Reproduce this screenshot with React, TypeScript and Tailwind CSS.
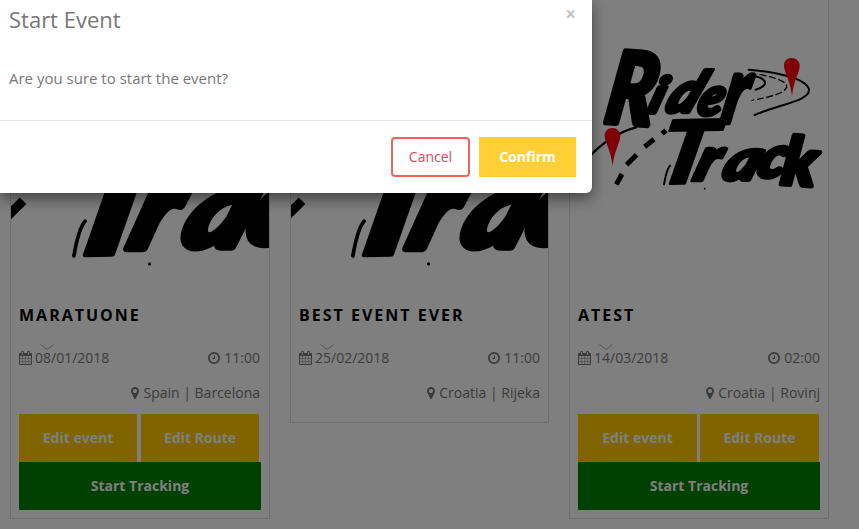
import React from "react";

type IconProps = { className?: string };

const CalendarIcon = ({ className }: IconProps) => (
  <svg viewBox="64 0 1664 1792" className={className} fill="currentColor">
    <path d="M192 1664h288v-288h-288v288zm352 0h320v-288h-320v288zm-352-352h288v-320h-288v320zm352 0h320v-320h-320v320zm-352-384h288v-288h-288v288zm736 736h320v-288h-320v288zm-384-736h320v-288h-320v288zm768 736h288v-288h-288v288zm-384-352h320v-320h-320v320zm-352-864v-288q0-13-9.5-22.5t-22.5-9.5h-64q-13 0-22.5 9.5t-9.5 22.5v288q0 13 9.5 22.5t22.5 9.5h64q13 0 22.5-9.5t9.5-22.5zm736 864h288v-320h-288v320zm-384-384h320v-288h-320v288zm384 0h288v-288h-288v288zm32-480v-288q0-13-9.5-22.5t-22.5-9.5h-64q-13 0-22.5 9.5t-9.5 22.5v288q0 13 9.5 22.5t22.5 9.5h64q13 0 22.5-9.5t9.5-22.5zm384-64v1280q0 52-38 90t-90 38h-1408q-52 0-90-38t-38-90v-1280q0-52 38-90t90-38h128v-96q0-66 47-113t113-47h64q66 0 113 47t47 113v96h384v-96q0-66 47-113t113-47h64q66 0 113 47t47 113v96h128q52 0 90 38t38 90z" />
  </svg>
);

const ClockIcon = ({ className }: IconProps) => (
  <svg viewBox="128 0 1536 1792" className={className} fill="currentColor">
    <path d="M1024 544v448q0 14-9 23t-23 9h-320q-14 0-23-9t-9-23v-64q0-14 9-23t23-9h224v-352q0-14 9-23t23-9h64q14 0 23 9t9 23zm416 352q0-148-73-273t-198-198-273-73-273 73-198 198-73 273 73 273 198 198 273 73 273-73 198-198 73-273zm224 0q0 209-103 385.5t-279.5 279.5-385.5 103-385.5-103-279.5-279.5-103-385.5 103-385.5 279.5-279.5 385.5-103 385.5 103 279.5 279.5 103 385.5z" />
  </svg>
);

const MarkerIcon = ({ className }: IconProps) => (
  <svg viewBox="384 0 1024 1792" className={className} fill="currentColor">
    <path d="M1152 640q0-106-75-181t-181-75-181 75-75 181 75 181 181 75 181-75 75-181zm256 0q0 109-33 179l-364 774q-16 33-47.5 52t-67.5 19-67.5-19-46.5-52l-365-774q-33-70-33-179 0-212 150-362t362-150 362 150 150 362z" />
  </svg>
);

type Glyph = { c: string; x: number; y: number; size: number; sx: number; skew: number; rot: number; w: number };

const glyphs: Glyph[] = [
  { c: "R", x: 38, y: 276, size: 298, sx: 0.8, skew: -6, rot: 4, w: 18 },
  { c: "i", x: 168, y: 248, size: 150, sx: 1.1, skew: -18, rot: 0, w: 12 },
  { c: "d", x: 220, y: 246, size: 168, sx: 1, skew: -24, rot: 0, w: 14 },
  { c: "e", x: 316, y: 254, size: 160, sx: 0.95, skew: -16, rot: 0, w: 12 },
  { c: "r", x: 388, y: 278, size: 280, sx: 0.72, skew: -12, rot: 0, w: 14 },
  { c: "T", x: 190, y: 462, size: 262, sx: 1.14, skew: -13, rot: -1, w: 8 },
  { c: "r", x: 306, y: 450, size: 180, sx: 1.05, skew: -18, rot: 0, w: 14 },
  { c: "a", x: 390, y: 449, size: 174, sx: 1.15, skew: -20, rot: 0, w: 12 },
  { c: "c", x: 494, y: 442, size: 172, sx: 1.05, skew: -18, rot: 0, w: 14 },
  { c: "k", x: 570, y: 462, size: 200, sx: 1, skew: -4, rot: 4, w: 14 },
];

const Pin = ({ x, y }: { x: number; y: number }) => (
  <path
    transform={`translate(${x} ${y})`}
    d="M0 0C-14 0-24 10-23 24C-21 46-5 66 1 114C6 66 23 46 24 24C24 10 14 0 0 0Z"
    fill="#ff0010"
  />
);

const RiderTrackLogo = ({ className }: IconProps) => (
  <svg viewBox="-60 -90 774 900" className={className}>
    <g fill="none" stroke="#000" strokeLinecap="round">
      <path d="M-10 388C30 344 78 308 138 292" strokeWidth="7" />
      <path d="M476 119C545 125 648 142 657 178C661 213 568 222 494 255" strokeWidth="6" />
      <path d="M488 137C522 142 531 157 521 167Q514 174 497 179" strokeWidth="6" />
      <path d="M510 133C560 145 592 154 590 172C582 190 545 200 486 211" strokeWidth="4" strokeDasharray="18 11" />
      <path d="M240 407C233 415 226 440 222 463" strokeWidth="6" />
      <path d="M228 301L216 311M192 328L164 350M140 374L110 404M96 432L79 463" strokeWidth="15" strokeLinecap="butt" />
    </g>
    <circle cx="344" cy="476" r="2.5" />
    {glyphs.map((g, i) => (
      <text
        key={i}
        transform={`translate(${g.x} ${g.y}) rotate(${g.rot}) skewX(${g.skew}) scale(${g.sx} 1)`}
        fontSize={g.size}
        strokeWidth={g.w}
        stroke="#000"
        strokeLinejoin="round"
        className="font-['Lato','Open_Sans',sans-serif] font-black italic"
      >
        {g.c}
      </text>
    ))}
    <Pin x={605} y={84} />
    <Pin x={67} y={294} />
  </svg>
);

type EventCardProps = {
  title: string;
  date: string;
  time: string;
  place: string;
  width: string;
  buttonRow?: string;
  textInset?: string;
  zoomed?: boolean;
  owned?: boolean;
};

const EventCard = ({
  title,
  date,
  time,
  place,
  width,
  buttonRow = "",
  textInset = "",
  zoomed,
  owned,
}: EventCardProps) => (
  <article className={`shrink-0 border border-t-0 border-[#dcdcdc] ${width}`}>
    <div className="flex h-[290px] items-start justify-center overflow-hidden">
      <RiderTrackLogo
        className={zoomed ? "-mt-[87px] mr-[3px] h-[558px] w-[480px] shrink-0" : "h-[300px] w-[258px] shrink-0"}
      />
    </div>
    <div className="px-2 pb-2">
      <h2 className="mt-3.5 text-base leading-[22px] font-bold tracking-[2px] whitespace-nowrap text-black uppercase">
        {title}
      </h2>
      <svg viewBox="0 0 14 6" className="mt-[18px] ml-[21px] h-1.5 w-3.5" fill="none" stroke="#aaa">
        <path d="M.5.5L7 5.5L13.5.5" />
      </svg>
      <div className={`flex justify-between leading-4 ${textInset}`}>
        <span className="flex items-center gap-[3px]">
          <CalendarIcon className="h-3.5 w-[13px]" />
          {date}
        </span>
        <span className="flex items-center gap-1">
          <ClockIcon className="h-3.5 w-3" />
          {time}
        </span>
      </div>
      <div className={`mt-[19px] flex items-center justify-end gap-1 leading-4 ${textInset}`}>
        <MarkerIcon className="h-3.5 w-2" />
        {place}
      </div>
      {owned ? (
        <div className="mt-[13px] font-bold text-white">
          <div className={`flex ${buttonRow}`}>
            <button className="h-12 flex-1 rounded-t-[1px] bg-[#ffc800]">Edit event</button>
            <button className="h-12 flex-1 rounded-t-[1px] bg-[#ffc800]">Edit Route</button>
          </div>
          <button className="block h-12 w-full rounded-[1px] bg-[#008000]">Start Tracking</button>
        </div>
      ) : (
        <div className="h-[13px]" />
      )}
    </div>
  </article>
);

export default function App() {
  return (
    <div className="relative h-[529px] w-[859px] overflow-hidden bg-white font-['Open_Sans','Noto_Sans',sans-serif] text-sm text-[#777]">
      <main className="flex items-start pl-2.5">
        <EventCard
          title="Maratuone"
          date="08/01/2018"
          time="11:00"
          place="Spain | Barcelona"
          width="mr-5 w-[260px]"
          buttonRow="gap-1 pr-0.5"
          textInset="pr-px"
          zoomed
          owned
        />
        <EventCard title="Best event ever" date="25/02/2018" time="11:00" place="Croatia | Rijeka" width="mr-5 w-[259px]" zoomed />
        <EventCard
          title="Atest"
          date="14/03/2018"
          time="02:00"
          place="Croatia | Rovinj"
          width="w-[260px]"
          buttonRow="gap-[3px] pr-px"
          owned
        />
      </main>

      <div className="absolute inset-0 bg-black/50" />

      <section
        role="dialog"
        className="absolute top-0 left-0 flex h-[193px] w-[592px] flex-col rounded-br-md bg-white shadow-[0_5px_15px_rgba(0,0,0,0.5)]"
      >
        <header className="flex justify-between pr-4 pl-[9px]">
          <h1 className="pt-1 text-[22px] leading-[31px]">Start Event</h1>
          <button className="h-7 text-[19px] leading-7 font-bold text-[#c4c4c4]">×</button>
        </header>
        <p className="mt-[33px] pl-[9px] text-[15px] leading-5">Are you sure to start the event?</p>
        <footer className="mt-8 flex justify-end gap-[9px] border-t border-[#e5e5e5] pt-4 pr-4">
          <button className="h-10 w-[79px] rounded border-2 border-[#ea6560] text-[#e0485a]">Cancel</button>
          <button className="h-10 w-[97px] bg-[#ffd035] font-bold text-white">Confirm</button>
        </footer>
      </section>
    </div>
  );
}
